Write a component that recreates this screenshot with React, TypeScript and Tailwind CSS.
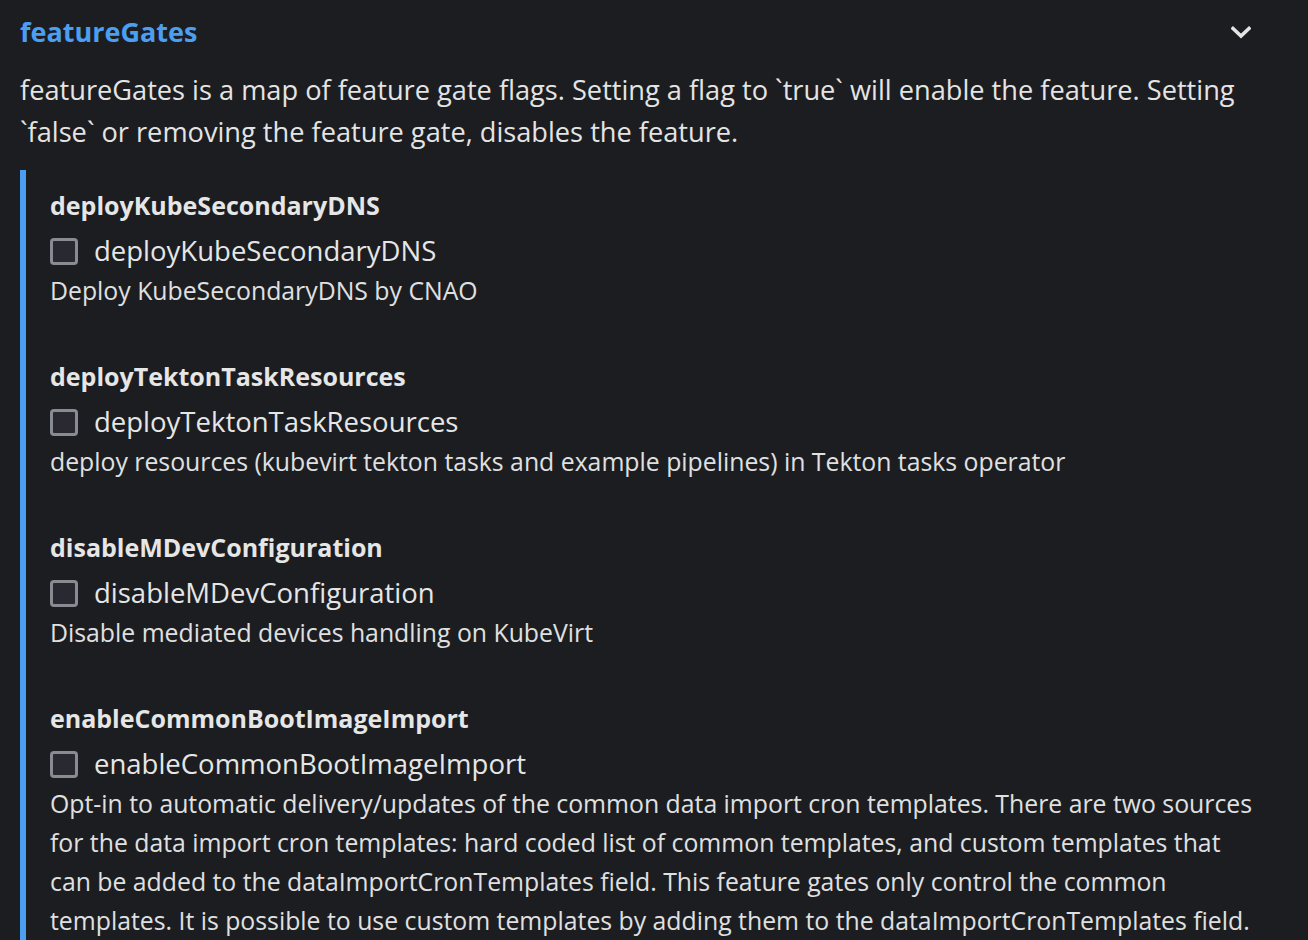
import React from "react";

type Gate = {
  name: string;
  description: React.ReactNode;
};

const gates: Gate[] = [
  {
    name: "deployKubeSecondaryDNS",
    description: "Deploy KubeSecondaryDNS by CNAO",
  },
  {
    name: "deployTektonTaskResources",
    description:
      "deploy resources (kubevirt tekton tasks and example pipelines) in Tekton tasks operator",
  },
  {
    name: "disableMDevConfiguration",
    description: "Disable mediated devices handling on KubeVirt",
  },
  {
    name: "enableCommonBootImageImport",
    description: (
      <>
        Opt-in to automatic delivery/updates of the common data import cron templates. There are two sources
        <br />
        for the data import cron templates: hard coded list of common templates, and custom templates that
        <br />
        can be added to the dataImportCronTemplates field. This feature gates only control the common
        <br />
        templates. It is possible to use custom templates by adding them to the dataImportCronTemplates field.
      </>
    ),
  },
];

const ChevronDown: React.FC = () => (
  <svg width="20" height="13" viewBox="0 0 20 13" fill="none">
    <polyline
      points="2,2.5 10,10 18,2.5"
      stroke="#e4e4e4"
      strokeWidth="3.6"
      strokeLinecap="square"
    />
  </svg>
);

const GateItem: React.FC<{ gate: Gate }> = ({ gate }) => (
  <div className="flex flex-col">
    <div className="text-[25px] font-bold leading-[36px] text-[#e6e6e6]">
      {gate.name}
    </div>
    <label className="mt-[8px] flex h-[40px] items-center gap-[16px]">
      <span className="h-[27px] w-[28px] rounded-[4px] border-[3px] border-[#8a8a93] bg-[#2a2932]" />
      <span className="text-[27.5px] text-[#e6e6e6]">{gate.name}</span>
    </label>
    <div className="whitespace-nowrap text-[24.8px] leading-[39px] text-[#e0e0e0]">
      {gate.description}
    </div>
  </div>
);

const App: React.FC = () => {
  return (
    <main className="min-h-screen w-full overflow-hidden bg-[#1b1d21] px-5 font-['Open_Sans','Noto_Sans',sans-serif] text-[#e0e0e0]">
      {/* header */}
      <div className="flex h-[64px] items-center justify-between pr-[37px]">
        <h2 className="text-[27px] font-bold text-[#4c9ff0]">featureGates</h2>
        <ChevronDown />
      </div>

      <p className="mt-[5px] text-[27.2px] leading-[42px] text-[#e4e4e4]">
        featureGates is a map of feature gate flags. Setting a flag to `true` will enable the feature. Setting
        <br />
        `false` or removing the feature gate, disables the feature.
      </p>

      {/* gates list */}
      <div className="mt-[17px] flex flex-col gap-[48px] border-l-[6px] border-[#4c9ff0] pb-6 pl-[24px] pt-[17px]">
        {gates.map((gate) => (
          <GateItem key={gate.name} gate={gate} />
        ))}
      </div>
    </main>
  );
};

export default App;
